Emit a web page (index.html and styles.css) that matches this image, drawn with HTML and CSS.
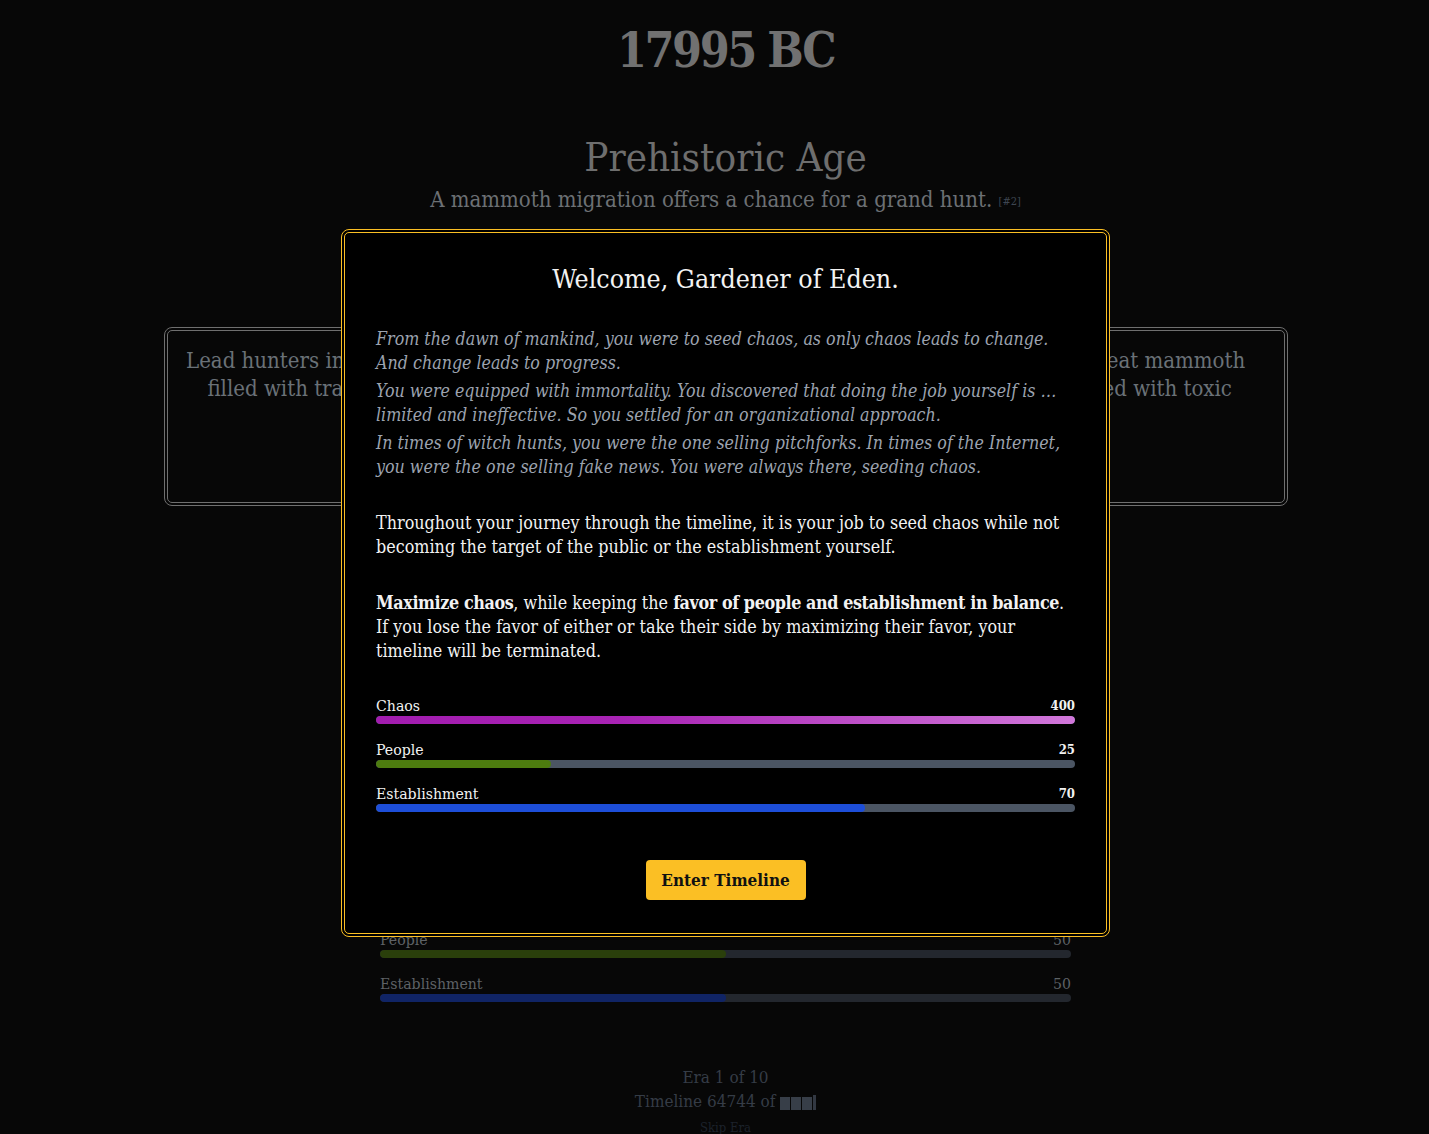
FILE: index.html
```html
<!DOCTYPE html>
<html lang="en">
<head>
<meta charset="utf-8">
<title>17995 BC</title>
<link rel="stylesheet" href="styles.css">
</head>
<body>
<main class="page">
  <h1 class="year">17995 BC</h1>
  <h2 class="era">Prehistoric Age</h2>
  <p class="event">A mammoth migration offers a chance for a grand hunt. <span class="ref">[#2]</span></p>

  <section class="cards">
    <div class="card">
      <p>Lead hunters into the narrow gorge below the cliff<br>filled with traps, pits, and the sharpest stakes.</p>
    </div>
    <div class="card">
      <p>Claim the spirits do forbid the great mammoth<br>hunts, and that its flesh is tainted with toxic<br>curses.</p>
    </div>
  </section>

  <section class="stats stats-bg">
    <div class="stat">
      <div class="stat-head"><span>Chaos</span><span>0</span></div>
      <div class="track"><div class="fill fill-chaos-bg" style="width:0%"></div></div>
    </div>
    <div class="stat">
      <div class="stat-head"><span>People</span><span>50</span></div>
      <div class="track"><div class="fill fill-people-bg" style="width:50%"></div></div>
    </div>
    <div class="stat">
      <div class="stat-head"><span>Establishment</span><span>50</span></div>
      <div class="track"><div class="fill fill-est-bg" style="width:50%"></div></div>
    </div>
  </section>

  <footer class="footer">
    <p>Era 1 of 10</p>
    <p>Timeline 64744 of <span class="glitch"><span></span><span></span><span></span><span class="tick"></span></span></p>
    <p class="skip">Skip Era</p>
  </footer>
</main>

<div class="overlay">
  <div class="modal">
    <h3 class="modal-title">Welcome, Gardener of Eden.</h3>
    <div class="lore">
      <p>From the dawn of mankind, you were to seed chaos, as only chaos leads to change.<br>And change leads to progress.</p>
      <p>You were equipped with immortality. You discovered that doing the job yourself is …<br>limited and ineffective. So you settled for an organizational approach.</p>
      <p>In times of witch hunts, you were the one selling pitchforks. In times of the Internet,<br>you were the one selling fake news. You were always there, seeding chaos.</p>
    </div>
    <p class="rule">Throughout your journey through the timeline, it is your job to seed chaos while not<br>becoming the target of the public or the establishment yourself.</p>
    <p class="rule"><strong>Maximize chaos</strong>, while keeping the <strong>favor of people and establishment in balance</strong>.<br>If you lose the favor of either or take their side by maximizing their favor, your<br>timeline will be terminated.</p>

    <section class="stats stats-modal">
      <div class="stat">
        <div class="stat-head"><span>Chaos</span><span class="num">400</span></div>
        <div class="track"><div class="fill fill-chaos" style="width:100%"></div></div>
      </div>
      <div class="stat">
        <div class="stat-head"><span>People</span><span class="num">25</span></div>
        <div class="track"><div class="fill fill-people" style="width:25%"></div></div>
      </div>
      <div class="stat">
        <div class="stat-head"><span>Establishment</span><span class="num">70</span></div>
        <div class="track"><div class="fill fill-est" style="width:70%"></div></div>
      </div>
    </section>

    <div class="actions">
      <button class="enter">Enter Timeline</button>
    </div>
  </div>
</div>
</body>
</html>
```

FILE: styles.css
```css
* { box-sizing: border-box; }

html, body {
  margin: 0;
  padding: 0;
  background: #070707;
}

body {
  font-family: "DejaVu Serif", "Liberation Serif", serif;
  font-stretch: semi-condensed;
  color: #6b6b6b;
}

.page {
  padding-left: 22px;
  display: flex;
  flex-direction: column;
  align-items: center;
}

.year {
  margin: 20px 0 0;
  font-size: 48px;
  letter-spacing: -2.5px;
  line-height: 60px;
  font-weight: 700;
  color: #717171;
}

.era {
  margin: 53px 0 0;
  font-size: 40px;
  line-height: 48px;
  font-weight: 400;
  color: #6e6e6e;
}

.event {
  margin: 5px 0 0;
  font-size: 22px;
  line-height: 28px;
  color: #6c7074;
}

.ref {
  font-size: 11px;
  color: #3e4651;
  vertical-align: 2px;
}

.cards {
  margin-top: 111px;
  width: 1124px;
  display: grid;
  grid-template-columns: 1fr 1fr;
  gap: 16px;
}

.card {
  height: 179px;
  border: 4px double #6f6f6f;
  border-radius: 8px;
  padding: 16px 12px;
  text-align: center;
  overflow: hidden;
}

.card p {
  margin: 0;
  font-size: 22px;
  line-height: 28px;
  color: #6a7177;
  white-space: nowrap;
}

.stats {
  display: flex;
  flex-direction: column;
  gap: 16px;
}

.stats-bg {
  width: 691px;
  margin-top: 380px;
}

.stat-head {
  display: flex;
  justify-content: space-between;
  align-items: flex-end;
  font-size: 15.7px;
  line-height: 20px;
}

.track {
  height: 8px;
  border-radius: 4px;
  overflow: hidden;
}

.fill {
  height: 100%;
  border-radius: 4px;
}

.stats-bg .stat-head { color: #5e6266; }
.stats-bg .track { background: #23272e; }
.fill-chaos-bg { background: #3d0f43; }
.fill-people-bg { background: #2a3f0b; }
.fill-est-bg { background: #102465; }

.footer {
  margin-top: 63px;
  text-align: center;
  color: #353c46;
}

.footer p {
  margin: 0;
  font-size: 17px;
  line-height: 24px;
}

.footer .skip {
  font-size: 13px;
  line-height: 30px;
  color: #1c222b;
}

.glitch {
  display: inline-flex;
  align-items: flex-end;
  gap: 1px;
  vertical-align: -3px;
}

.glitch span {
  display: inline-block;
  width: 10px;
  height: 13px;
  background: #373e48;
}

.glitch .tick {
  width: 3px;
  height: 15px;
  background: #323842;
}

/* modal */
.overlay {
  position: fixed;
  inset: 0;
  padding: 229px 0 0 22px;
  display: flex;
  justify-content: center;
  align-items: flex-start;
}

.modal {
  width: 769px;
  background: #000;
  border: 4px double #fbbf24;
  border-radius: 8px;
  padding: 32px 31px 33px;
}

.modal-title {
  margin: 0;
  text-align: center;
  font-size: 26.5px;
  line-height: 28px;
  font-weight: 400;
  color: #f2f2f2;
}

.lore {
  margin-top: 34px;
  display: flex;
  flex-direction: column;
  gap: 4px;
}

.lore p {
  margin: 0;
  font-style: italic;
  font-size: 17.7px;
  line-height: 24px;
  color: #9ca3af;
  white-space: nowrap;
}

.rule {
  margin: 32px 0 0;
  font-size: 17.8px;
  line-height: 24px;
  color: #f2f2f2;
  white-space: nowrap;
}

.rule strong {
  font-weight: 700;
  letter-spacing: -0.4px;
}

.stats-modal {
  margin-top: 33px;
}

.stats-modal .stat-head { color: #f2f2f2; }
.stats-modal .num { font-size: 13px; font-weight: 700; }
.stats-modal .track { background: #4b5563; }
.fill-chaos { background: linear-gradient(90deg, #a21caf 0%, #a823b4 35%, #d177da 100%); }
.fill-people { background: #4d7c0f; }
.fill-est { background: #1d4ed8; }

.actions {
  margin-top: 48px;
  display: flex;
  justify-content: center;
}

.enter {
  width: 160px;
  height: 40px;
  border: 0;
  border-radius: 4px;
  background: #fbbf24;
  color: #111;
  font-family: inherit;
  font-stretch: semi-condensed;
  font-size: 17px;
  font-weight: 700;
}
```
